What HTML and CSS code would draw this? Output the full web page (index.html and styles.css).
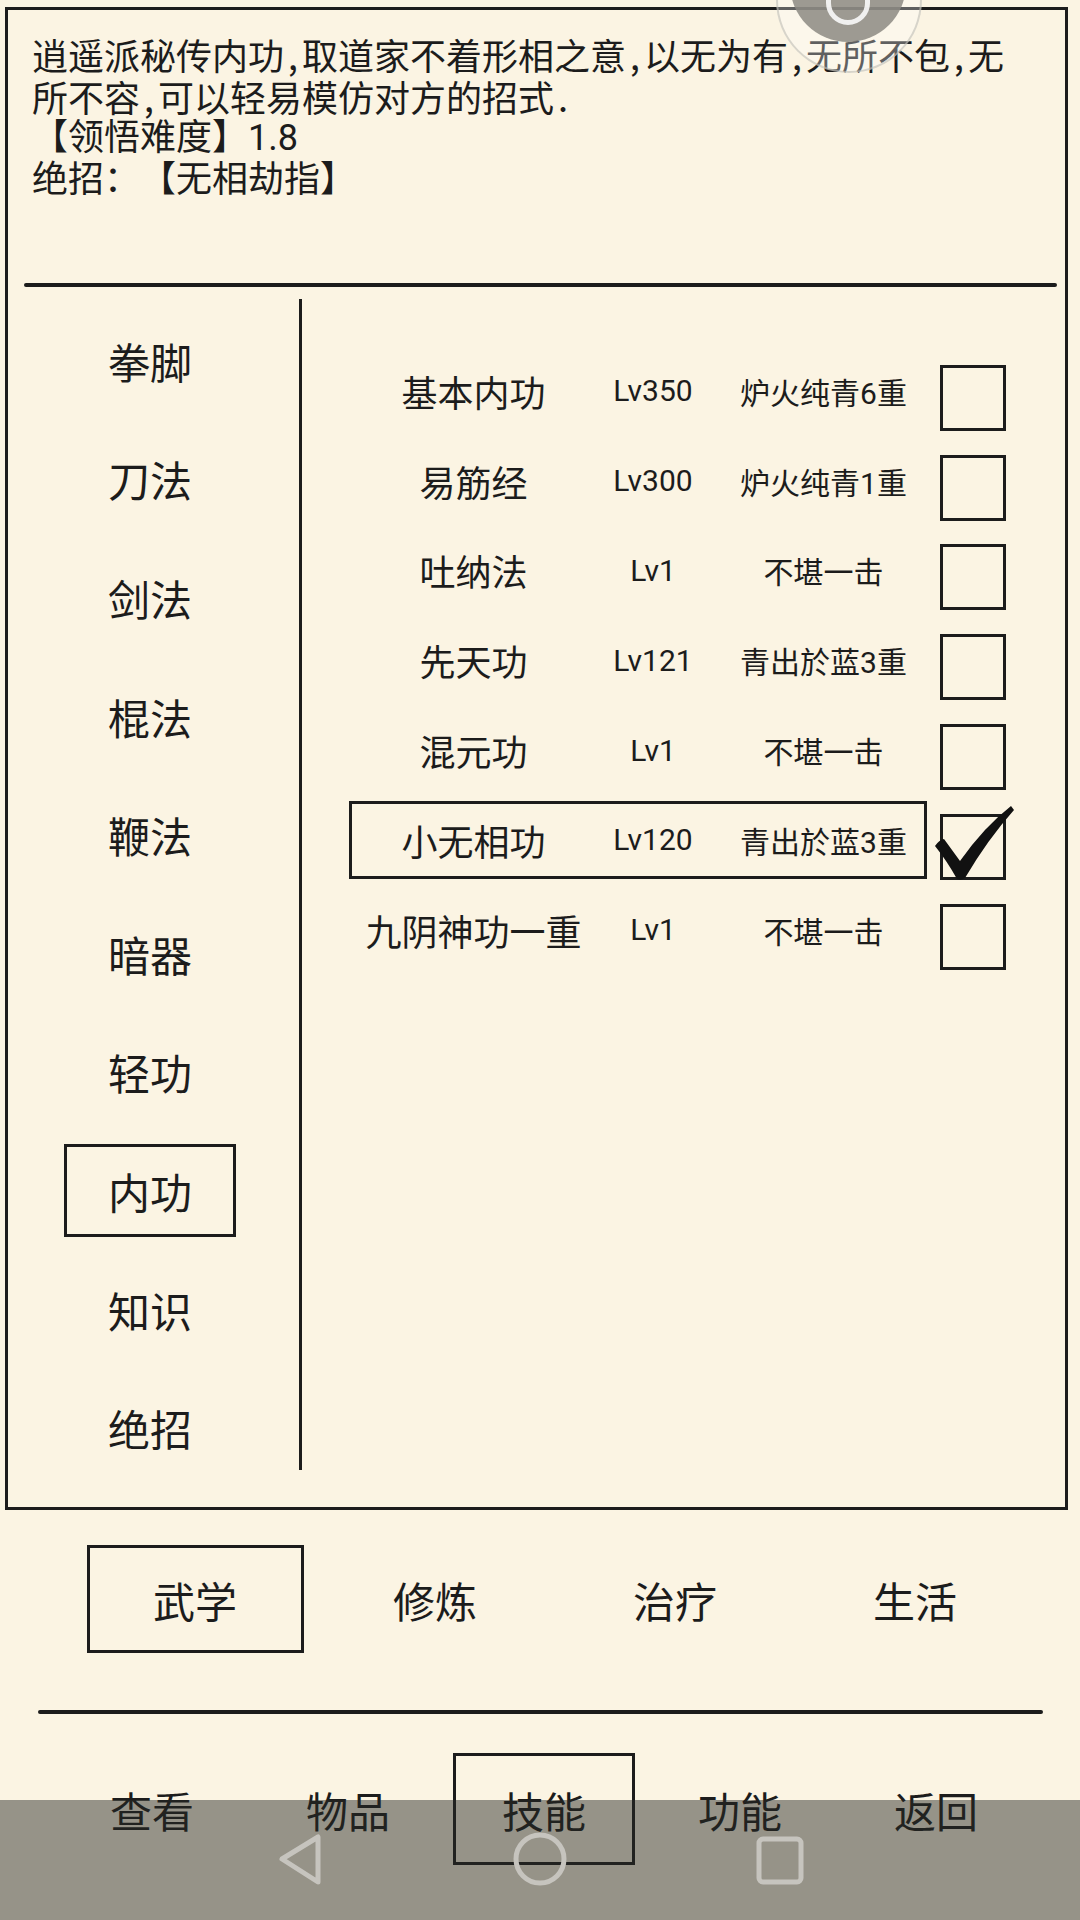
FILE: index.html
```html
<!DOCTYPE html>
<html lang="zh-CN">
<head>
	<meta charset="UTF-8">
	<title>武学 - 内功</title>
	<link rel="stylesheet" href="styles.css">
</head>
<body>
	<div class="screen">
		<section class="panel">
			<div class="intro">
				<p class="desc">逍遥派秘传内功,取道家不着形相之意,以无为有,无所不包,无所不容,可以轻易模仿对方的招式.</p>
				<p>【领悟难度】1.8</p>
				<p>绝招：【无相劫指】</p>
			</div>
			<div class="rule"></div>
			<div class="body">
				<ul class="cats">
					<li><span>拳脚</span></li>
					<li><span>刀法</span></li>
					<li><span>剑法</span></li>
					<li><span>棍法</span></li>
					<li><span>鞭法</span></li>
					<li><span>暗器</span></li>
					<li><span>轻功</span></li>
					<li class="on"><span>内功</span></li>
					<li><span>知识</span></li>
					<li><span>绝招</span></li>
				</ul>
				<ul class="skills">
					<li class="row">
						<div class="info"><span class="name">基本内功</span><span class="lv">Lv350</span><span class="state">炉火纯青6重</span></div>
						<span class="check"></span>
					</li>
					<li class="row">
						<div class="info"><span class="name">易筋经</span><span class="lv">Lv300</span><span class="state">炉火纯青1重</span></div>
						<span class="check"></span>
					</li>
					<li class="row">
						<div class="info"><span class="name">吐纳法</span><span class="lv">Lv1</span><span class="state">不堪一击</span></div>
						<span class="check"></span>
					</li>
					<li class="row">
						<div class="info"><span class="name">先天功</span><span class="lv">Lv121</span><span class="state">青出於蓝3重</span></div>
						<span class="check"></span>
					</li>
					<li class="row">
						<div class="info"><span class="name">混元功</span><span class="lv">Lv1</span><span class="state">不堪一击</span></div>
						<span class="check"></span>
					</li>
					<li class="row on">
						<div class="info"><span class="name">小无相功</span><span class="lv">Lv120</span><span class="state">青出於蓝3重</span></div>
						<span class="check">
							<svg class="tick" viewBox="0 0 80 76">
								<path d="M1 41 Q5 35 10 34 L26 56 Q50 22 77 1 L80 5 Q54 34 31 73 Q27 76 23 74 Q13 56 1 41 Z"/>
							</svg>
						</span>
					</li>
					<li class="row">
						<div class="info"><span class="name">九阴神功一重</span><span class="lv">Lv1</span><span class="state">不堪一击</span></div>
						<span class="check"></span>
					</li>
				</ul>
			</div>
		</section>

		<ul class="tabs">
			<li class="on"><span>武学</span></li>
			<li><span>修炼</span></li>
			<li><span>治疗</span></li>
			<li><span>生活</span></li>
		</ul>
		<div class="rule rule-wide"></div>
		<ul class="nav">
			<li><span>查看</span></li>
			<li><span>物品</span></li>
			<li class="on"><span>技能</span></li>
			<li><span>功能</span></li>
			<li><span>返回</span></li>
		</ul>

		<!-- 悬浮球 -->
		<div class="ball">
			<div class="ball-ring"></div>
			<div class="ball-core"></div>
			<div class="ball-icon"></div>
		</div>

		<!-- 系统导航栏 -->
		<div class="sysbar">
			<svg viewBox="0 0 1080 120">
				<path d="M282 59 L318 37 L318 82 Z"/>
				<circle cx="540" cy="59" r="24"/>
				<rect x="759" y="39" width="42" height="43" rx="4"/>
			</svg>
		</div>
	</div>
</body>
</html>
```

FILE: styles.css
```css
*{margin:0;padding:0;}
li{list-style: none}
body{
	background: #fbf4e3;
	color: #1c1c1c;
	font-family: Roboto, "Noto Sans CJK SC", sans-serif;
	text-spacing-trim: space-all;
}
.screen{
	position: relative;
	width: 1080px;
	height: 1920px;
	overflow: hidden;
}

/* 上方大框 */
.panel{
	box-sizing: border-box;
	height: 1503px;
	margin: 7px 12px 0 5px;
	border: 3px solid #1c1c1c;
}
.intro{
	box-sizing: border-box;
	height: 273px;
	padding: 23px 0 0 24px;
	font-size: 36px;
	line-height: 42px;
}
.intro .desc{
	width: 990px;
	font-family: "Noto Sans Mono CJK SC", "Noto Sans CJK SC", monospace;
}
.rule{
	height: 4px;
	margin: 0 8px 0 16px;
	border-radius: 2px;
	background: #1c1c1c;
}
.body{
	display: flex;
	height: 1220px;
}

/* 左侧分类 */
.cats{
	box-sizing: border-box;
	width: 294px;
	height: 1171px;
	margin-top: 12px;
	padding: 2px 7px 0 0;
	border-right: 3px solid #1c1c1c;
	font-size: 42px;
}
.cats li{
	display: flex;
	justify-content: center;
	align-items: center;
	height: 118.6px;
}
.cats li span{
	display: flex;
	justify-content: center;
	align-items: center;
	box-sizing: border-box;
	width: 172px;
	height: 93px;
	border: 3px solid transparent;
}
.cats li.on span{
	border-color: #1c1c1c;
}

/* 右侧技能列表 */
.skills{
	flex: 1;
	padding: 59px 0 0 47px;
}
.row{
	display: flex;
	align-items: center;
	height: 89.8px;
}
.info{
	display: flex;
	align-items: center;
	box-sizing: border-box;
	width: 578px;
	height: 78px;
	border: 3px solid transparent;
	font-size: 30px;
	text-align: center;
}
.row.on .info{
	border-color: #1c1c1c;
}
.name{
	width: 243px;
	font-size: 36px;
}
.lv{
	width: 116px;
}
.state{
	box-sizing: border-box;
	width: 213px;
	padding-left: 12px;
}
.check{
	position: relative;
	box-sizing: border-box;
	width: 66px;
	height: 66px;
	margin: 14px 0 0 13px;
	border: 3px solid #1c1c1c;
}
.tick{
	position: absolute;
	left: -9px;
	top: -12px;
	width: 80px;
	height: 76px;
	fill: #111;
}

/* 底部分页 */
.tabs{
	display: flex;
	margin: 35px 0 0 75px;
	font-size: 42px;
}
.tabs li{
	display: flex;
	justify-content: center;
	width: 240px;
}
.tabs li span{
	display: flex;
	justify-content: center;
	align-items: center;
	box-sizing: border-box;
	width: 217px;
	height: 108px;
	border: 3px solid transparent;
}
.tabs li.on span{
	border-color: #1c1c1c;
}
.rule-wide{
	margin: 57px 37px 0 38px;
}
.nav{
	display: flex;
	margin: 39px 0 0 54px;
	font-size: 42px;
}
.nav li{
	display: flex;
	justify-content: center;
	width: 196px;
}
.nav li span{
	display: flex;
	justify-content: center;
	align-items: center;
	box-sizing: border-box;
	width: 182px;
	height: 112px;
	border: 3px solid transparent;
}
.nav li.on span{
	border-color: #1c1c1c;
}

/* 悬浮球 */
.ball-ring{
	position: absolute;
	left: 776px;
	top: -73px;
	width: 146px;
	height: 146px;
	box-sizing: border-box;
	border-radius: 50%;
	border: 2px solid rgba(190,188,180,0.6);
	background: rgba(255,255,255,0.3);
}
.ball-core{
	position: absolute;
	left: 790px;
	top: -74px;
	width: 116px;
	height: 116px;
	border-radius: 50%;
	background: rgba(140,138,130,0.85);
}
.ball-icon{
	position: absolute;
	left: 826px;
	top: -30px;
	width: 44px;
	height: 55px;
	box-sizing: border-box;
	border: 5px solid rgba(255,255,255,0.85);
	border-radius: 22px;
}

/* 系统导航栏 */
.sysbar{
	position: absolute;
	left: 0;
	bottom: 0;
	width: 1080px;
	height: 120px;
	background: rgba(40,42,38,0.48);
}
.sysbar svg{
	display: block;
	width: 1080px;
	height: 120px;
	fill: none;
	stroke: #c6c4be;
	stroke-width: 5;
	stroke-linejoin: round;
}
```
